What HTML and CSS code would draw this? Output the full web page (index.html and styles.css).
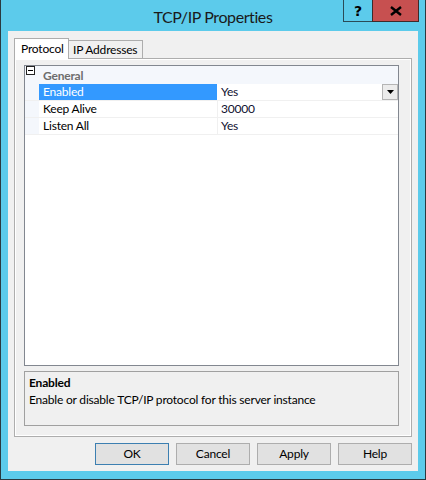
FILE: index.html
```html
<!DOCTYPE html>
<html>
<head>
<meta charset="utf-8">
<link rel="stylesheet" href="styles.css">
</head>
<body>
<div class="window">
  <div class="titlebar">
    <div class="title">TCP/IP Properties</div>
    <div class="caption-buttons">
      <div class="cap-btn help-btn">?</div>
      <div class="cap-btn close-btn">
        <svg width="12" height="10" viewBox="0 0 12 10"><path d="M1 1 L11 9 M11 1 L1 9" stroke="#000" stroke-width="2.4" fill="none"/></svg>
      </div>
    </div>
  </div>
  <div class="client">
    <div class="tabs">
      <div class="tab selected">Protocol</div>
      <div class="tab">IP Addresses</div>
    </div>
    <div class="panel">
      <div class="grid">
        <div class="row category">
          <div class="margin"><span class="minus"></span></div>
          <div class="cat-label">General</div>
        </div>
        <div class="row selected-row">
          <div class="margin"></div>
          <div class="name">Enabled</div>
          <div class="value">Yes<span class="drop"><svg width="7" height="4" viewBox="0 0 7 4"><path d="M0 0 H7 L3.5 4 Z" fill="#000"/></svg></span></div>
        </div>
        <div class="row">
          <div class="margin"></div>
          <div class="name">Keep Alive</div>
          <div class="value">30000</div>
        </div>
        <div class="row">
          <div class="margin"></div>
          <div class="name">Listen All</div>
          <div class="value">Yes</div>
        </div>
        <div class="grid-empty"></div>
      </div>
      <div class="desc">
        <div class="desc-title">Enabled</div>
        <div class="desc-text">Enable or disable TCP/IP protocol for this server instance</div>
      </div>
    </div>
    <div class="buttons">
      <div class="btn default">OK</div>
      <div class="btn">Cancel</div>
      <div class="btn">Apply</div>
      <div class="btn">Help</div>
    </div>
  </div>
</div>
</body>
</html>
```

FILE: styles.css
```css
* { box-sizing: border-box; }
html, body { margin: 0; padding: 0; }
body {
  width: 426px;
  height: 480px;
  font-family: Lato, "Noto Sans", sans-serif;
  font-size: 12px;
  letter-spacing: -0.2px;
  color: #000;
}
.window {
  width: 426px;
  height: 480px;
  background: #5ccbeb;
  border: 1px solid #2a3a40;
  border-top: none;
  padding: 0 7px 8px 7px;
  display: flex;
  flex-direction: column;
}
.titlebar {
  position: relative;
  height: 31px;
  flex: none;
}
.title {
  text-align: center;
  font-size: 16px;
  letter-spacing: -0.4px;
  line-height: 31px;
  color: #1a1a1a;
  margin-left: -7px;
  margin-right: -7px;
  padding-top: 1px;
}
.caption-buttons {
  position: absolute;
  top: 0;
  right: -1px;
  display: flex;
}
.cap-btn {
  height: 22px;
  display: flex;
  align-items: center;
  justify-content: center;
  border: 1px solid #2a4b57;
  border-top: none;
}
.help-btn {
  width: 29px;
  background: #5ccbeb;
  font-family: "DejaVu Sans", sans-serif;
  font-weight: bold;
  font-size: 14px;
  letter-spacing: 0;
  border-right: none;
}
.close-btn {
  width: 47px;
  background: #c75050;
  border-color: #3f2a2a;
}
.client {
  flex: 1;
  background: #f0f0f0;
  padding: 7px 6px 0 6px;
  display: flex;
  flex-direction: column;
}
.tabs {
  display: flex;
  align-items: flex-end;
  height: 20px;
  position: relative;
  z-index: 1;
}
.tab {
  border: 1px solid #adadad;
  border-bottom: none;
  background: #f0f0f0;
  height: 18px;
  padding: 0 4px;
  line-height: 17px;
  white-space: nowrap;
  width: 74px;
}
.tab.selected {
  background: #fff;
  height: 21px;
  width: 55px;
  margin-bottom: -1px;
  padding: 0 6px;
  line-height: 19px;
}
.tab + .tab { border-left: none; }
.panel {
  border: 1px solid #adadad;
  background: #f0f0f0;
  width: 398px;
  height: 379px;
  padding: 6px 12px 0 9px;
  box-shadow: inset 1px 1px 0 #fff, inset -1px -1px 0 #fff;
}
.grid {
  border: 1px solid #828790;
  background: #fff;
  height: 301px;
  display: flex;
  flex-direction: column;
}
.row {
  display: flex;
  height: 17px;
  border-bottom: 1px solid #f0f0f0;
  line-height: 16px;
  flex: none;
}
.row.category {
  height: 18px;
  background: #f4f7fc;
  border-bottom: none;
  line-height: 19px;
}
.margin {
  width: 14px;
  flex: none;
  background: #f4f7fc;
  position: relative;
}
.minus {
  position: absolute;
  left: 1px;
  top: 0px;
  width: 9px;
  height: 9px;
  border: 1px solid #222;
  background: #fff;
}
.minus::after {
  content: "";
  position: absolute;
  left: 1px;
  top: 3px;
  width: 5px;
  height: 1px;
  background: #000;
}
.cat-label {
  padding-left: 4px;
  color: #6d6d6d;
  font-weight: bold;
}
.name {
  width: 179px;
  flex: none;
  padding-left: 4px;
  border-right: 1px solid #f0f0f0;
}
.value {
  flex: 1;
  padding-left: 3px;
  display: flex;
  justify-content: space-between;
  color: #101030;
}
.selected-row .name {
  background: #3399ff;
  color: #fff;
  border-right-color: #fff;
}
.drop {
  width: 16px;
  height: 16px;
  border: 1px solid #b5b5b5;
  background: #ececec;
  display: flex;
  align-items: center;
  justify-content: center;
}
.grid-empty { flex: 1; }
.desc {
  margin-top: 5px;
  border: 1px solid #a0a0a0;
  height: 55px;
  padding: 2px 4px;
  line-height: 17px;
}
.desc-title { font-weight: bold; }
.buttons {
  display: flex;
  justify-content: flex-end;
  gap: 7px;
  padding-top: 6px;
}
.btn {
  width: 74px;
  height: 22px;
  border: 1px solid #adadad;
  background: #e1e1e1;
  text-align: center;
  line-height: 20px;
}
.btn.default { border-color: #3c7fb1; }
```
